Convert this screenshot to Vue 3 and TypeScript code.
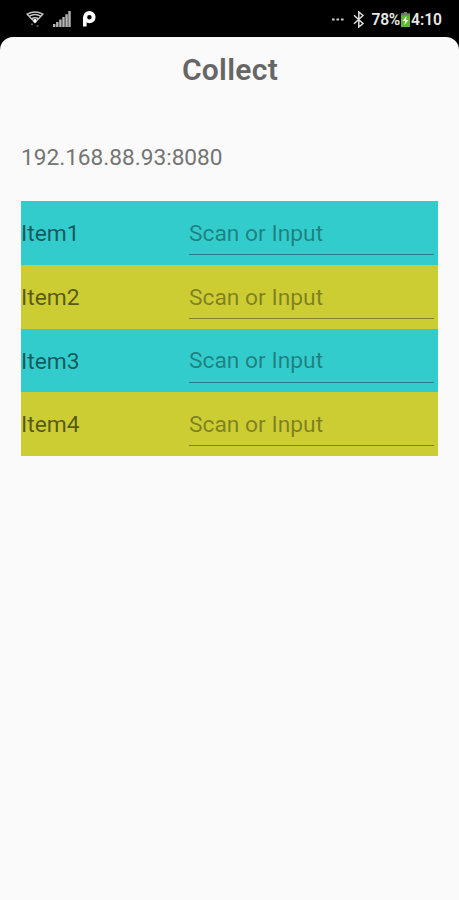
<script setup lang="ts">
import { ref } from 'vue'

interface Item {
  label: string
  value: string
}

const server = '192.168.88.93:8080'
const items = ref<Item[]>([
  { label: 'Item1', value: '' },
  { label: 'Item2', value: '' },
  { label: 'Item3', value: '' },
  { label: 'Item4', value: '' },
])
</script>

<template>
  <div class="screen">
    <header class="status">
      <div class="left">
        <svg class="wifi" width="18" height="18" viewBox="0 0 18 18" fill="none" stroke="#c4c4c4" stroke-width="1.5">
          <path d="M1.200 4.200Q9-.4 16.800 4.200L9 12.500Z" />
          <path d="M3.200 6.200Q9 3 14.800 6.200M5.500 8.800Q9 6.500 12.500 8.800" />
          <path d="M9 9v3.500" stroke="#fff" stroke-width="2.600" />
          <path d="M5 14.200h2M10.500 16h2" stroke="#666" />
        </svg>
        <svg class="signal" width="18" height="16" viewBox="0 0 18 16" fill="#b5b5b5">
          <path d="M0 13h2.400v3H0zM3.100 11h2.400v5H3.100zM6.200 8.500h2.400V16H6.200zM9.300 6h2.400v10H9.300zM12.400 3.200h2.400V16h-2.400zM15.300 0h2.400v16h-2.400z" />
        </svg>
        <svg class="pmark" width="14" height="16" viewBox="0 0 14 16" fill="none" stroke="#fff">
          <circle cx="7.400" cy="6.200" r="4.200" stroke-width="3.900" />
          <path d="M2.800 5.500V15.500" stroke-width="3.600" />
        </svg>
      </div>
      <div class="right">
        <svg class="dots" width="12" height="3" viewBox="0 0 12 3" fill="#ccc">
          <path d="M0 .5h2.600v2H0zM4.500.5h2.600v2H4.500zM9 .5h2.600v2H9z" />
        </svg>
        <svg class="bluetooth" width="12" height="17" viewBox="0 0 12 17" fill="none" stroke="#ddd" stroke-width="1.500">
          <path d="M1 4.300l9 8.200-4.200 3.500V1L10 4.500 1 12.700" />
        </svg>
        <span class="percent">78%</span>
        <svg class="battery" width="9" height="15" viewBox="0 0 9 15">
          <path d="M3 0h3v1.500h3V15H0V1.500h3z" fill="#5fb82e" />
          <path d="M3 0h3v1.500h3v2H0v-2h3z" fill="#777" />
          <path d="M5.500 4L1.500 9h2.500L3.500 13l4-5H5z" fill="#f1ffe9" />
        </svg>
        <span class="clock">4:10</span>
      </div>
    </header>
    <main class="sheet">
      <h1 class="title">Collect</h1>
      <p class="server">{{ server }}</p>
      <div class="list">
        <label v-for="item in items" :key="item.label" class="row">
          <span class="name">{{ item.label }}</span>
          <input v-model="item.value" class="field" type="text" placeholder="Scan or Input" />
        </label>
      </div>
    </main>
  </div>
</template>

<style>
body {
  background: #000;
}
</style>

<style scoped>
.screen {
  display: flex;
  flex-direction: column;
  height: 900px;
  background: #000;
  font-family: Roboto, "Liberation Sans", sans-serif;
}
.status {
  display: flex;
  justify-content: space-between;
  flex: none;
  box-sizing: border-box;
  height: 37px;
  padding: 0 17px 0 26px;
  color: #e8e8e8;
}
.left,
.right {
  display: flex;
  align-items: center;
  height: 38px;
}
.signal {
  margin-left: 9px;
}
.pmark {
  margin-left: 11px;
}
.bluetooth {
  margin-left: 9px;
}
.percent,
.clock {
  font-size: 15.600px;
  font-weight: 600;
  line-height: 20px;
  margin-top: 2px;
}
.percent {
  margin-left: 7px;
  letter-spacing: -0.300px;
}
.battery {
  margin-left: 1px;
}
.clock {
  margin-left: 1px;
}
.sheet {
  flex: 1;
  padding: 0 21px;
  border-radius: 13px 13px 0 0;
  background: #fafafa;
}
.title {
  margin: 0;
  padding: 15px 0 0 1px;
  color: #666;
  font-size: 30px;
  font-weight: 600;
  letter-spacing: 0.300px;
  line-height: 36px;
  text-align: center;
}
.server {
  margin: 54px 0 0;
  color: #747474;
  font-size: 22.650px;
  line-height: 32px;
}
.list {
  margin-top: 27px;
}
.row {
  display: flex;
  box-sizing: border-box;
  height: 63.750px;
  padding-right: 4px;
  background: #33cccc;
}
.row:nth-child(even) {
  background: #cccc33;
}
.name {
  width: 168px;
  color: rgba(0, 0, 0, 0.58);
  font-size: 22.800px;
  line-height: 65px;
}
.field {
  flex: 1;
  min-width: 0;
  box-sizing: border-box;
  height: 54px;
  padding: 11.500px 0 0;
  border: 0;
  border-bottom: 1px solid rgba(0, 0, 0, 0.36);
  border-radius: 0;
  outline: 0;
  background: transparent;
  color: rgba(0, 0, 0, 0.8);
  font: 22.800px Roboto, "Liberation Sans", sans-serif;
}
.field::placeholder {
  color: rgba(0, 0, 0, 0.38);
  opacity: 1;
}
</style>
